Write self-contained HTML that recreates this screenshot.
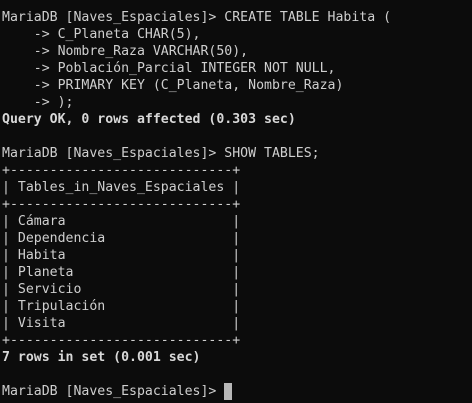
<!DOCTYPE html>
<html><head><meta charset="utf-8"><style>
html,body{margin:0;padding:0;background:#0c0c0c;width:472px;height:403px;overflow:hidden}
pre{margin:0;padding:9px 0 0 2px;font-family:"DejaVu Sans Mono","Liberation Mono",monospace;font-size:13.2px;line-height:17px;color:#cfcfcf;white-space:pre}
b{font-weight:bold;color:#d8d8d8}
.c{display:inline-block;width:8px;height:17px;background:#b8b8b8;vertical-align:top}
</style></head><body><pre>MariaDB [Naves_Espaciales]&gt; CREATE TABLE Habita (
    -&gt; C_Planeta CHAR(5),
    -&gt; Nombre_Raza VARCHAR(50),
    -&gt; Población_Parcial INTEGER NOT NULL,
    -&gt; PRIMARY KEY (C_Planeta, Nombre_Raza)
    -&gt; );
<b>Query OK, 0 rows affected (0.303 sec)</b>

MariaDB [Naves_Espaciales]&gt; SHOW TABLES;
+----------------------------+
| Tables_in_Naves_Espaciales |
+----------------------------+
| Cámara                     |
| Dependencia                |
| Habita                     |
| Planeta                    |
| Servicio                   |
| Tripulación                |
| Visita                     |
+----------------------------+
<b>7 rows in set (0.001 sec)</b>

MariaDB [Naves_Espaciales]&gt; <span class="c"></span></pre></body></html>
